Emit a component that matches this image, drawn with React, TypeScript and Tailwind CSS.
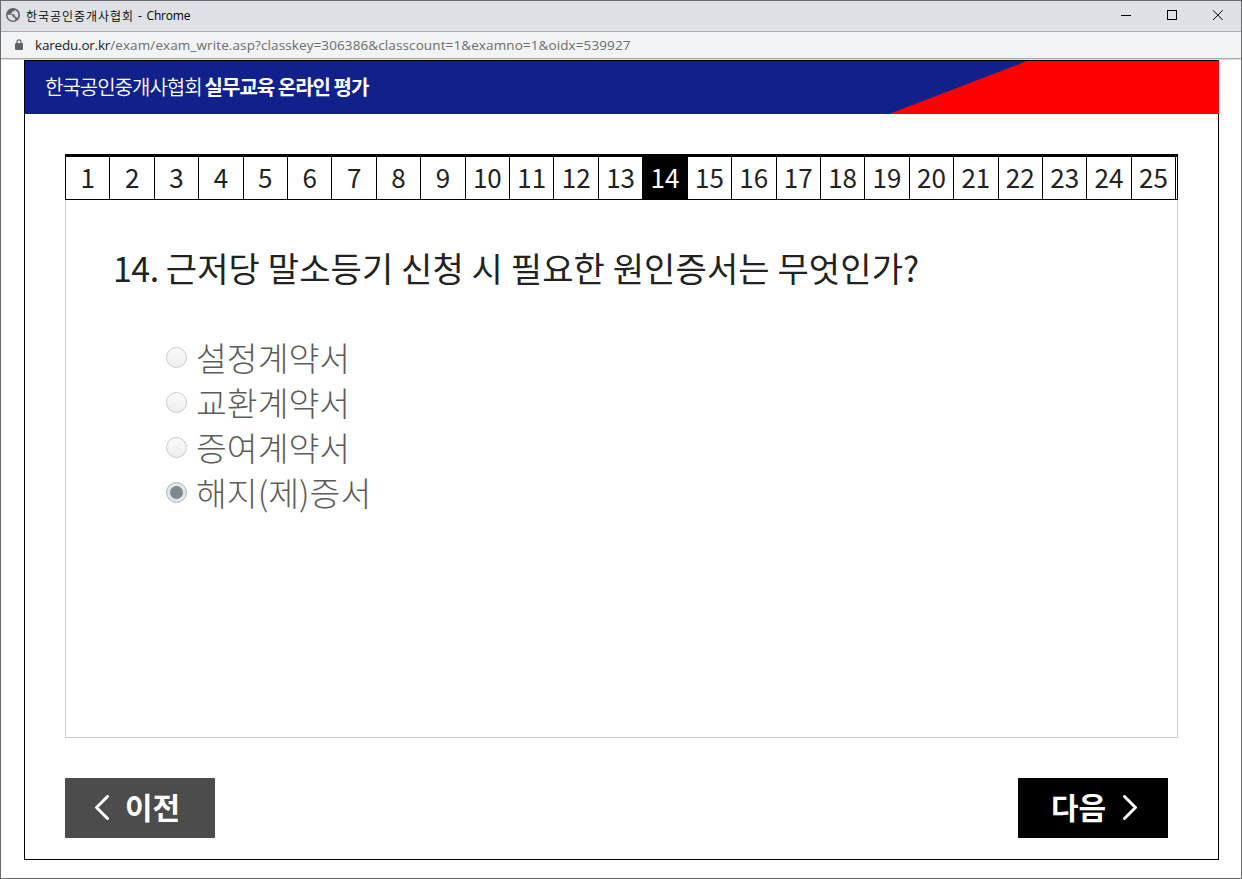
const questions = Array.from({ length: 25 }, (_, i) => i + 1);
const current = 14;

const answers = ["설정계약서", "교환계약서", "증여계약서", "해지(제)증서"];
const selected = 3;

function TitleBar() {
  return (
    <div className="flex h-[31px] shrink-0 items-center border-b border-[#a9acaf] bg-[#dee1e6] pl-[5px]">
      <svg className="-mt-[2px]" width="14" height="14" viewBox="0 0 14 14">
        <circle cx="7" cy="7" r="7" fill="#5f6368" />
        <path d="M1.5 6.8H4.6q2 0 2.2 1.6V9.6H8.2q.9 0 .9 1v1.6A5.6 5.6 0 0 1 1.5 6.8Z" fill="#dee1e6" />
        <path d="M8.6 1.7v.5q0 1.2-1.2 1.2H6v1.3q0 .7-.8.7H4.6v.9H8q.7 0 .7.7v1.6h.8q.9 0 1.2.9l.4.9A5.6 5.6 0 0 0 8.6 1.7Z" fill="#dee1e6" />
      </svg>
      <span className="ml-[6px] text-[12px] font-[350] tracking-[0.95px] text-black">한국공인중개사협회</span>
      <span className="ml-[4px] font-['Open_Sans','Noto_Sans_CJK_KR',sans-serif] text-[12px] tracking-[-0.2px] whitespace-pre text-black">
        -<span className="ml-[5px]">Chrome</span>
      </span>
      <svg className="mr-[17px] ml-auto -mt-px" width="103" height="11" viewBox="0 0 103 11" fill="none" stroke="#000">
        <path d="M0 5.5h10" />
        <rect x="46.5" y="0.5" width="9" height="9" />
        <path d="M92 .3 101.7 10M101.7 .3 92 10" />
      </svg>
    </div>
  );
}

function AddressBar() {
  return (
    <div className="flex h-[28px] shrink-0 flex-col border-b border-[#d9dadb] bg-[#f1f3f4]">
      <div className="flex h-[27px] items-center border-b border-[#a9acaf] pl-[14px]">
        <svg className="-mt-px" width="8" height="11" viewBox="0 0 8 11">
          <rect y="4" width="8" height="7" rx="1" fill="#5f6368" />
          <path d="M2 4.5V2.8a2 2 0 0 1 4 0v1.7" fill="none" stroke="#5f6368" strokeWidth="1.2" />
        </svg>
        <span className="ml-[12px] font-['Open_Sans','Noto_Sans_CJK_KR',sans-serif] text-[13.5px] tracking-[0.11px] text-[#6a6d71]">
          <span className="tracking-[-0.2px] text-[#202124]">karedu.or.kr</span>
          /exam/exam_write.asp?classkey=306386&amp;classcount=1&amp;examno=1&amp;oidx=539927
        </span>
      </div>
    </div>
  );
}

function Radio({ checked }: { checked: boolean }) {
  if (checked) {
    return (
      <span className="flex size-[21px] items-center justify-center rounded-full border border-[#acb8c1] bg-[#dfe5ea]">
        <span className="size-[13px] rounded-full bg-[#81878e]" />
      </span>
    );
  }
  return <span className="size-[21px] rounded-full border border-[#c8caca] bg-linear-to-b from-[#fafafa] to-[#eeeeee]" />;
}

export default function App() {
  return (
    <div className="flex h-[879px] w-[1242px] flex-col overflow-hidden border border-[#6b6b6b] bg-white font-['Noto_Sans_CJK_KR',sans-serif]">
      <TitleBar />
      <AddressBar />

      <div className="ml-[23px] flex h-[800px] w-[1195px] shrink-0 flex-col border border-black">
        <header className="relative -mr-px flex h-[53px] shrink-0 items-center bg-[#10218b] pl-[20px] text-[20px] tracking-[-1px] text-white">
          <svg className="absolute top-0 right-0" width="330" height="53" viewBox="0 0 330 53">
            <path d="M0 53 138 0H330V53Z" fill="#f00" />
          </svg>
          <span className="-mt-[2px] font-[350]">한국공인중개사협회</span>
          <span className="-mt-[2px] ml-[3px] font-bold">실무교육 온라인 평가</span>
        </header>

        <main className="mt-[40px] ml-[40px] flex h-[584px] w-[1113px] flex-col">
          <nav className="flex h-[46px] shrink-0 border border-t-[3px] border-black">
            {questions.map((n) => (
              <a
                key={n}
                className={
                  n === current
                    ? "flex w-[44.41px] shrink-0 items-center justify-center border-r border-black bg-black pb-[3px] text-[26px] text-white"
                    : "flex w-[44.41px] shrink-0 items-center justify-center border-r border-black pb-[3px] text-[26px] text-[#222]"
                }
              >
                {n}
              </a>
            ))}
          </nav>
          <section className="flex-1 border border-t-0 border-[#ccc] pl-[47px]">
            <h1 className="mt-[43px] text-[34px] leading-[50px] tracking-[0.12px] text-[#222]">
              <span className="tracking-[-0.5px]">14. </span>
              근저당 말소등기 신청 시 필요한 원인증서는 무엇인가?
            </h1>
            <ul className="mt-[42px] ml-[53px] text-[33.5px] font-light text-[#5c5c5c]">
              {answers.map((answer, i) => (
                <li key={answer} className="flex h-[45px] items-center">
                  <Radio checked={i === selected} />
                  <span className="-mt-[2px] ml-[9px] leading-[45px]">{answer}</span>
                </li>
              ))}
            </ul>
          </section>
        </main>

        <footer className="mt-[40px] mr-[50px] ml-[40px] flex justify-between text-[30px] font-bold text-white">
          <button className="flex h-[60px] w-[150px] items-center bg-[#4c4c4c] pl-[30px]">
            <svg className="-mt-[2px]" width="14" height="25" viewBox="0 0 14 25" fill="none" stroke="#fff" strokeWidth="3" strokeLinecap="round">
              <path d="M12.5 1.5 1.5 12.5l11 11" />
            </svg>
            <span className="-mt-[4px] ml-[16px]">이전</span>
          </button>
          <button className="flex h-[60px] w-[150px] items-center bg-black pl-[33px]">
            <span className="-mt-[4px]">다음</span>
            <svg className="-mt-[2px] ml-[17px]" width="14" height="25" viewBox="0 0 14 25" fill="none" stroke="#fff" strokeWidth="3" strokeLinecap="round">
              <path d="M1.5 1.5l11 11-11 11" />
            </svg>
          </button>
        </footer>
      </div>
    </div>
  );
}
